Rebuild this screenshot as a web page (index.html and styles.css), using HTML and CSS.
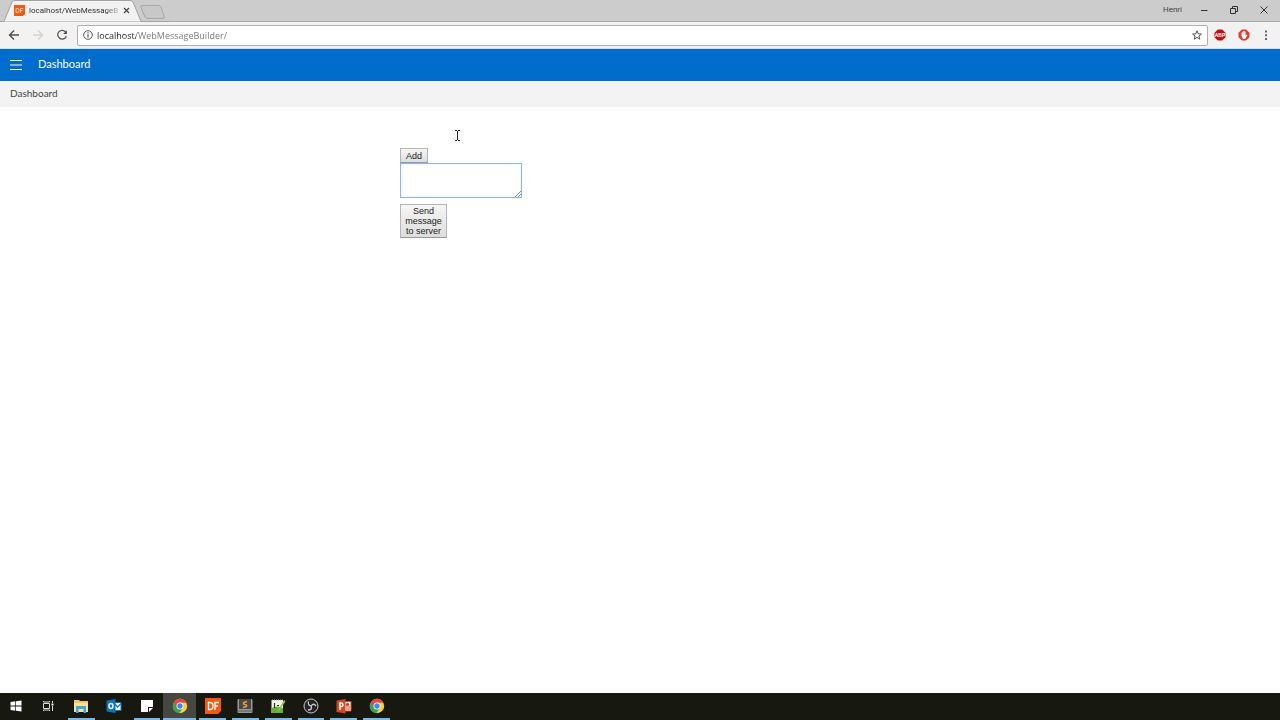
FILE: index.html
```
<!DOCTYPE html>
<html lang="en">
<head>
    <meta charset="utf-8">
    <title>Dashboard</title>
    <link rel="stylesheet" href="styles.css">
</head>

<body>
<header class="browser">
  <div class="titlebar">
    <svg class="tabs" width="170" height="22" viewBox="0 0 170 22" aria-hidden="true">
      <path d="M0 21.5H4L12 2Q13 .5 15 .5H130Q132 .5 133 2L141 21.5H170V22H0Z" fill="#f2f2f2" stroke="#a3a3a3"/>
      <path d="M143 5.500H158Q160 5.500 161 7L164 16Q165 18.500 163 18.500H148Q146 18.500 145 17L141 7.500Q140 5.500 143 5.500Z" fill="#c8c8c8" stroke="#a6a6a6"/>
    </svg>
    <div class="tab">
      <svg width="11" height="11" viewBox="0 0 16 16" aria-hidden="true"><path d="M0 0H16V13L13 16H0Z" fill="#f15a10"/><path d="M3 5V11H4.500Q7.500 11 7.500 8T4.500 5ZM13.500 5H9.500V11.500M9.500 8H12.500" fill="none" stroke="#ffe3d3" stroke-width="1.200"/></svg>
      <span class="tab-title">localhost/WebMessageB</span>
      <button class="tab-close" aria-label="Close tab"><svg width="7" height="7" viewBox="0 0 7 7"><path d="M1 1L6 6M6 1L1 6" stroke="#444" stroke-width="1.200"/></svg></button>
    </div>
    <div class="window-buttons">
      <span class="user">Henri</span>
      <button aria-label="Minimize"><svg width="8" height="8" viewBox="0 0 8 8"><path d="M1 4.500H7.500" stroke="#333"/></svg></button>
      <button aria-label="Restore"><svg width="8" height="8" viewBox="0 0 8 8"><path d="M.5 2.500H5.500V7.500H.5ZM2.500 2.500V.5H7.500V5.500H5.500" fill="none" stroke="#333"/></svg></button>
      <button aria-label="Close"><svg width="8" height="8" viewBox="0 0 8 8"><path d="M.5 .5L7.500 7.500M7.500 .5L.5 7.500" stroke="#333"/></svg></button>
    </div>
  </div>
  <div class="toolbar">
    <div class="nav">
      <button aria-label="Back"><svg width="12" height="12" viewBox="0 0 12 12"><path d="M11 6H2M6 1.500L1.500 6L6 10.500" fill="none" stroke="#505050" stroke-width="1.400"/></svg></button>
      <button aria-label="Forward"><svg width="12" height="12" viewBox="0 0 12 12"><path d="M1 6H10M6 1.500L10.500 6L6 10.500" fill="none" stroke="#d2d2d2" stroke-width="1.400"/></svg></button>
      <button aria-label="Reload"><svg width="12" height="12" viewBox="0 0 12 12"><path d="M9.800 3.200A4.400 4.400 0 1 0 10.300 7.200" fill="none" stroke="#505050" stroke-width="1.300"/><path d="M10.900 1.200V5H7.100Z" fill="#505050"/></svg></button>
    </div>
    <div class="address">
      <svg width="10" height="10" viewBox="0 0 10 10" aria-hidden="true"><circle cx="5" cy="5" r="4.300" fill="none" stroke="#555"/><path d="M5 4.300V7.500M5 2.300V3.500" stroke="#555" stroke-width="1.200"/></svg>
      <input class="url" type="text" aria-label="Address" value="localhost/WebMessageBuilder/" spellcheck="false">
      <button aria-label="Bookmark"><svg width="10" height="10" viewBox="0 0 10 10"><path d="M5 .8L6.200 3.800L9.400 4L6.900 6L7.800 9.200L5 7.400L2.200 9.200L3.100 6L.6 4L3.800 3.800Z" fill="none" stroke="#555"/></svg></button>
    </div>
    <div class="extensions">
      <button aria-label="Adblock Plus"><svg width="12" height="12" viewBox="0 0 12 12"><path d="M3.800 .5H8.200L11.500 3.800V8.200L8.200 11.500H3.800L.5 8.200V3.800Z" fill="#c70d0d"/><text x="6" y="8" text-anchor="middle" class="abp">ABP</text></svg></button>
      <button aria-label="Adblock"><svg width="12" height="12" viewBox="0 0 12 12"><path d="M3.800 1H8.200L11 3.800V8.200L8.200 11H3.800L1 8.200V3.800Z" fill="#e23b2c" stroke="#df3b2c"/><path d="M3.500 7V3.500H4.500V2.500H5.500V2H6.500V2.500H7.500V6.500L8.500 5.500L9.500 6L7.500 9.500L6.500 10H5Z" fill="#fff"/><path d="M4.500 3.500V6M5.500 2.500V6M6.500 3V6" stroke="#f0a39b" stroke-width=".3"/></svg></button>
      <button aria-label="Menu"><svg width="12" height="12" viewBox="0 0 12 12"><path d="M5 1.500H7V3.500H5ZM5 5.200H7V7.200H5ZM5 9H7V11H5Z" fill="#666"/></svg></button>
    </div>
  </div>
</header>

<nav class="app-bar">
  <button class="hamburger" aria-label="Toggle menu"><svg width="12" height="10" viewBox="0 0 12 10"><path d="M0 .5H12M0 5H12M0 9.500H12" stroke="#fff"/></svg></button>
  <span>Dashboard</span>
</nav>
<div class="breadcrumb"><a href="#">Dashboard</a></div>

<main class="content">
  <button class="btn" type="button">Add</button>
  <div class="message-box">
    <textarea class="message" id="message" aria-label="Message"></textarea>
    <svg class="grip" width="6" height="6" viewBox="0 0 6 6" aria-hidden="true"><path d="M0 6L6 0M3 6L6 3" stroke="#888"/></svg>
  </div>
  <button class="btn send" type="button">Send message to server</button>
  <svg class="cursor" width="5" height="11" viewBox="0 0 5 11" aria-hidden="true"><path d="M0 .5H2M3 .5H5M2.500 1V10M0 10.500H2M3 10.500H5" stroke="#222"/></svg>
</main>

<footer class="taskbar">
  <button aria-label="Start"><svg width="12" height="12" viewBox="0 0 12 12"><path d="M.5 2L5.300 1.300V5.600H.5ZM6 1.200L11.500 .4V5.600H6ZM.5 6.400H5.300V10.700L.5 10ZM6 6.400H11.500V11.600L6 10.800Z" fill="#fff"/></svg></button>
  <button aria-label="Task view"><svg width="12" height="12" viewBox="0 0 12 12"><path d="M1.500 3.500H7.500V8.500H1.500ZM1.500 1V2H7.500V1M1.500 11V10H7.500V11M10.500 1V3M10.500 6V11" fill="none" stroke="#ddd"/><path d="M9.500 3.500H11.500V5.500H9.500Z" fill="#fff"/></svg></button>
  <button class="open" aria-label="File Explorer"><svg width="16" height="16" viewBox="0 0 16 16"><path d="M1 2H6L7 3H15V14H1Z" fill="#f0c667"/><path d="M1 5H15V14H1Z" fill="#fbe197"/><path d="M3 8H13V15H10.500V11H5.500V15H3Z" fill="#42a5d9"/></svg></button>
  <button aria-label="Outlook"><svg width="16" height="16" viewBox="0 0 16 16"><path d="M8 4.500H15V12.500H8Z" fill="#fff" stroke="#0873c4"/><path d="M9 6L11.500 9L15 5.500" fill="none" stroke="#0873c4" stroke-width="1.200"/><path d="M.5 2.500L9.500 1V15L.5 13.500Z" fill="#0873c4"/><ellipse cx="5" cy="8" rx="2" ry="2.500" fill="none" stroke="#fff" stroke-width="1.400"/></svg></button>
  <button class="open" aria-label="Sticky Notes"><svg width="16" height="16" viewBox="0 0 16 16"><path d="M2 2H14V9H9V14H2Z" fill="#fff"/><path d="M10 14V10H14Z" fill="#fff"/></svg></button>
  <button class="open active" aria-label="Chrome"><svg width="16" height="16" viewBox="0 0 16 16"><circle cx="8" cy="8" r="7.200" fill="#f8cf3e"/><path d="M8 8L1.800 4.400A7.200 7.200 0 0 0 7.300 15.200L11 9.700Z" fill="#35a455"/><path d="M1.800 4.400A7.200 7.200 0 0 1 14.400 4.700H8L4.900 9.600Z" fill="#e34b3c"/><circle cx="8" cy="8" r="3.500" fill="#fff"/><circle cx="8" cy="8" r="2.700" fill="#4385ed"/></svg></button>
  <button class="open" aria-label="DataFlex"><svg width="16" height="16" viewBox="0 0 16 16"><path d="M0 0H16V13L13 16H0Z" fill="#f15a10"/><path d="M3.500 4.500V11.500H5Q8 11.500 8 8T5 4.500ZM14 4.500H10V12M10 8H13" fill="none" stroke="#fff" stroke-width="1.300"/></svg></button>
  <button class="open" aria-label="Sublime Text"><svg width="16" height="16" viewBox="0 0 16 16"><rect x=".5" y="1" width="15" height="14" rx="1" fill="#999"/><rect x="2" y="1" width="12" height="10" fill="#474747"/><path d="M1 12H15V14H1Z" fill="#777"/><path d="M10 3.500L6.500 4.500V6L9.500 7V8.500L6 9.500" fill="none" stroke="#f79a31" stroke-width="1.400"/></svg></button>
  <button class="open" aria-label="Notepad"><svg width="16" height="16" viewBox="0 0 16 16"><path d="M1.500 2H13V15H1.500Z" fill="#f4f5e9"/><path d="M1.500 10Q7 7 13 10V15H1.500Z" fill="#67b13b"/><path d="M2 2H13" stroke="#aaa" stroke-dasharray="1 1"/><path d="M4.500 5V10M7 7.500H9" stroke="#333" stroke-width="1.200"/><path d="M14 2L15.500 3.500L9.500 12L8 13L8.500 11Z" fill="#9cc63e"/></svg></button>
  <button class="open" aria-label="OBS Studio"><svg width="16" height="16" viewBox="0 0 16 16"><circle cx="8" cy="8" r="7" fill="#242428" stroke="#c9c9c9"/><path d="M8.200 8Q4.500 7.500 5.500 3.500M8.200 8Q10.500 4.500 13 8M8.200 8Q9.500 12 5 12" fill="none" stroke="#ccc" stroke-width="1.300"/></svg></button>
  <button class="open" aria-label="PowerPoint"><svg width="16" height="16" viewBox="0 0 16 16"><path d="M8 3.500H15V13H8Z" fill="#fff" stroke="#d24726"/><path d="M10 9H14M10 11H14" stroke="#d24726"/><circle cx="11.500" cy="6.500" r="1.700" fill="#d24726"/><path d="M.5 2.500L9.500 1V15.500L.5 14Z" fill="#d24726"/><path d="M4 12V5H5.500Q7 5 7 6.800T5.500 8.500H4" fill="none" stroke="#fff" stroke-width="1.400"/></svg></button>
  <button class="open" aria-label="Chrome"><svg width="16" height="16" viewBox="0 0 16 16"><circle cx="8" cy="8" r="7.200" fill="#f8cf3e"/><path d="M8 8L1.800 4.400A7.200 7.200 0 0 0 7.300 15.200L11 9.700Z" fill="#35a455"/><path d="M1.800 4.400A7.200 7.200 0 0 1 14.400 4.700H8L4.900 9.600Z" fill="#e34b3c"/><circle cx="8" cy="8" r="3.500" fill="#fff"/><circle cx="8" cy="8" r="2.700" fill="#4385ed"/></svg></button>
</footer>
</body>
</html>
```

FILE: styles.css
```
*{
  box-sizing: border-box;
}
body{
  margin: 0;
  min-height: 100vh;
  display: flex;
  flex-direction: column;
  background: #fff;
  font-family: Lato, sans-serif;
}
button{
  display: flex;
  align-items: center;
  justify-content: center;
  margin: 0;
  padding: 0;
  border: none;
  background: none;
}
svg{
  display: block;
  flex: none;
}

/* browser window */
.browser{
  font-family: "Open Sans", sans-serif;
}
.titlebar{
  position: relative;
  display: flex;
  justify-content: space-between;
  height: 22px;
  background: #ccc;
  border-bottom: 1px solid #a9a9a9;
}
.tabs{
  position: absolute;
  left: 0;
  top: 0;
}
.tab{
  position: relative;
  display: flex;
  align-items: center;
  gap: 4px;
  padding-left: 14px;
}
.tab-title{
  min-width: 88px;
  white-space: nowrap;
  font-family: Roboto, sans-serif;
  font-size: 8px;
  color: #333;
  -webkit-mask-image: linear-gradient(90deg, #000 76px, rgba(0,0,0,.3) 88px);
}
.tab-close{
  margin-left: 1px;
}
.window-buttons{
  display: flex;
  align-items: center;
  gap: 22px;
  padding: 0 12px 2px 0;
}
.user{
  margin-right: -4px;
  font-family: Roboto, sans-serif;
  font-size: 8px;
  color: #444;
}
.toolbar{
  display: flex;
  align-items: center;
  height: 27px;
  background: #f2f2f2;
  border-bottom: 1px solid #ddd;
}
.nav{
  display: flex;
  gap: 12px;
  padding: 0 9px 0 8px;
}
.address{
  flex: 1;
  display: flex;
  align-items: center;
  height: 21px;
  padding: 0 5px;
  background: #fff;
  border: 1px solid #b0b0b0;
  border-radius: 2px;
}
.url{
  flex: 1;
  min-width: 0;
  padding: 0 4px;
  border: none;
  outline: none;
  font-family: inherit;
  font-size: 9px;
  color: transparent;
  /* host dark, path grey */
  background: linear-gradient(90deg, #222 43px, #777 43px);
  -webkit-background-clip: text;
  background-clip: text;
}
.extensions{
  display: flex;
  gap: 12px;
  padding: 0 8px 0 6px;
}
.extensions button:last-child{
  margin-left: -2px;
}
.abp{
  font: bold 5px "Liberation Sans", sans-serif;
  fill: #fff;
}

/* application */
.app-bar{
  display: flex;
  align-items: center;
  gap: 16px;
  height: 32px;
  padding: 0 10px;
  background: #006dcc;
  color: #fff;
  font-size: 11px;
  line-height: 14px;
}
.app-bar span{
  padding-bottom: 2px;
}
.breadcrumb{
  height: 26px;
  padding: 0 10px;
  background: #f3f3f3;
  font-size: 10px;
  line-height: 24px;
}
.breadcrumb a{
  color: #444;
  text-decoration: none;
}
.content{
  position: relative;
  flex: 1;
  width: 480px;
  margin: 0 auto;
  padding-top: 41px;
}
.btn{
  padding: 2px 5px 1px;
  border: 1px solid #b5b5b5;
  border-bottom-color: #999;
  background: linear-gradient(#f6f6f6, #ddd);
  color: #222;
  font: 9px/10px "Liberation Sans", sans-serif;
  text-align: center;
}
.btn:first-child{
  height: 15px;
}
.send{
  width: 47px;
  margin-top: 6px;
  padding: 1px 4px;
}
.message-box{
  position: relative;
  width: 122px;
}
.message{
  display: block;
  width: 100%;
  height: 35px;
  padding: 2px;
  border: 1px solid #8db5ea;
  outline: none;
  box-shadow: inset 0 0 1px #8db5ea;
  resize: none;
  font: 9px "Liberation Mono", monospace;
}
.grip{
  position: absolute;
  right: 1px;
  bottom: 1px;
}
.cursor{
  position: absolute;
  left: 55px;
  top: 23px;
}

/* windows taskbar */
.taskbar{
  display: grid;
  grid-template-columns: 31px 34px repeat(10, minmax(0, 1fr));
  height: 27px;
  padding-right: calc(100% - 393px);
  background: #171810;
}
.taskbar button{
  border-bottom: 2px solid transparent;
}
.taskbar .open{
  margin: 0 3px;
  border-bottom-color: #76b9ed;
}
.taskbar .active{
  margin: 0;
  background: #464740;
}
```
